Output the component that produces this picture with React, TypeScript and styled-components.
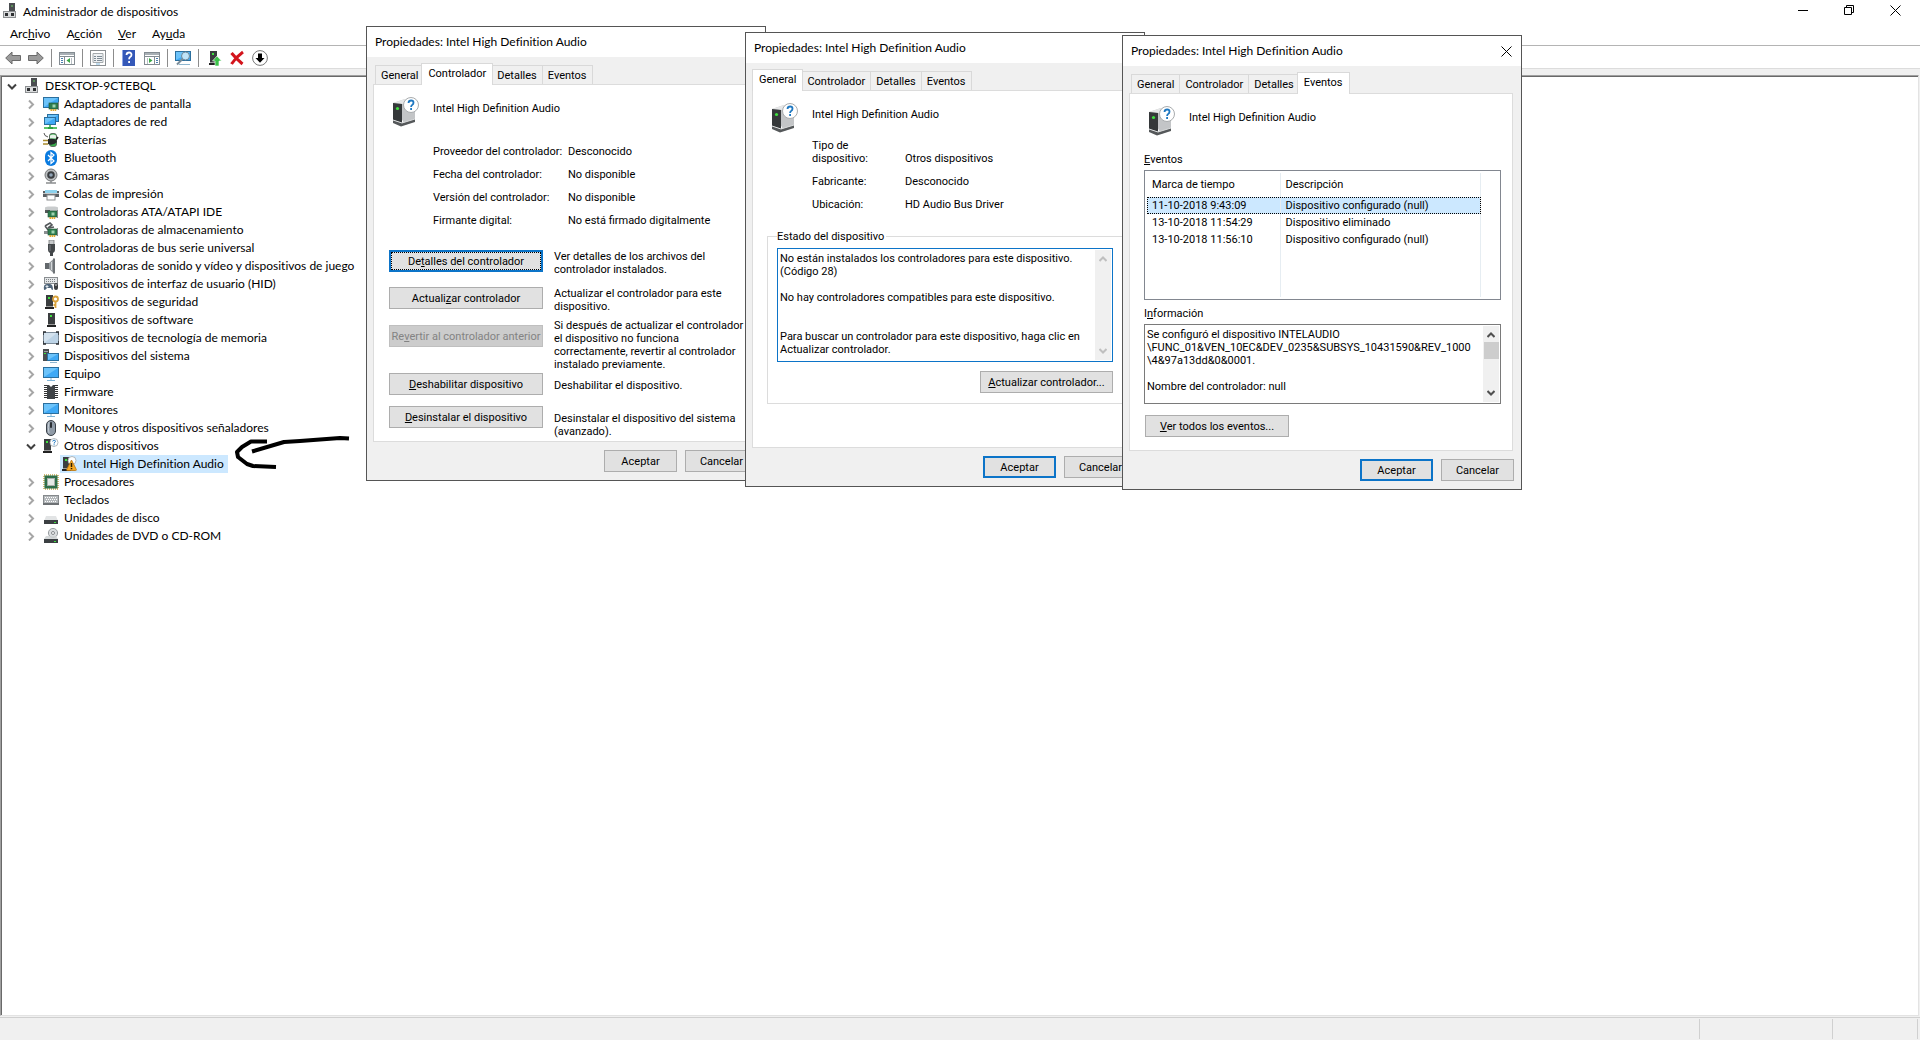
import React, { Fragment, ReactNode } from "react";
import styled, { createGlobalStyle, css } from "styled-components";

const UI_FONT = `Lato, "Open Sans", "Noto Sans", sans-serif`;
const DIALOG_FONT = `Roboto, "Liberation Sans", Arial, sans-serif`;

const color = {
  face: "#f0f0f0",
  line: "#dcdcdc",
  button: "#e1e1e1",
  buttonLine: "#adadad",
  accent: "#0c74c8",
  select: "#cce8ff",
  dark: "#696969",
  frame: "#555",
};

const GlobalStyle = createGlobalStyle`
  *, *::before, *::after { box-sizing: border-box; }
  body { margin: 0; background: #fff; color: #000; }
  button, textarea { font: inherit; color: inherit; }
`;

/* ---------- Main window ---------- */

const Desktop = styled.div`
  position: relative;
  display: flex;
  flex-direction: column;
  min-height: 100vh;
  overflow: hidden;
  font: 12px/18px ${UI_FONT};
  font-variant-ligatures: none;
`;

const TitleBar = styled.header`
  display: flex;
  align-items: flex-start;
  height: 24px;
  padding: 3px 2px 0 2px;
`;

const AppTitle = styled.h1`
  flex: 1;
  margin: 0 0 0 5px;
  font: inherit;
`;

const CaptionButton = styled.button`
  display: grid;
  place-items: center;
  width: 46px;
  height: 14px;
  padding: 0;
  border: 0;
  background: none;
`;

const MenuBar = styled.nav`
  display: flex;
  height: 22px;
  padding: 0 2px 2px;
  border-bottom: 1px solid #b4b4b4;
`;

const MenuItem = styled.button`
  padding: 0 8px;
  border: 0;
  background: none;
`;

const Toolbar = styled.div`
  display: flex;
  align-items: center;
  gap: 7px;
  height: 23px;
  padding: 2px 5px 0;
  border-bottom: 1px solid ${color.line};
`;

const ToolButton = styled.button`
  display: flex;
  padding: 0;
  border: 0;
  background: none;
`;

const ToolSeparator = styled.span`
  width: 1px;
  height: 18px;
  background: #8c8c8c;
`;

const Frame = styled.main`
  flex: 1;
  display: flex;
  padding: 6px 1px 1px 0;
  background: ${color.face};
`;

const TreePane = styled.div`
  flex: 1;
  border: 1px solid;
  border-color: #a0a0a0 #e3e3e3 #e3e3e3 #a0a0a0;
  background: #fff;
`;

const TreeInset = styled.div`
  height: 100%;
  border: solid ${color.dark};
  border-width: 1px 0 0 1px;
`;

const TreeList = styled.ul`
  margin: 0;
  padding: 0;
  list-style: none;
`;

const TreeRow = styled.div<{ $depth: number }>`
  display: flex;
  align-items: center;
  height: 18px;
  padding-left: ${(p) => p.$depth * 19}px;
`;

const Expander = styled.span`
  display: grid;
  place-items: center;
  width: 20px;
`;

const TreeLabel = styled.span<{ $selected?: boolean }>`
  display: flex;
  align-items: center;
  gap: 5px;
  padding: 0 4px 0 2px;
  white-space: nowrap;
  background: ${(p) => (p.$selected ? color.select : "none")};
`;

const StatusBar = styled.footer`
  display: flex;
  justify-content: flex-end;
  height: 23px;
  padding: 1px 2px 1px 0;
  border-top: 1px solid #d0d0d0;
  background: ${color.face};
`;

const StatusCell = styled.span<{ $width: number }>`
  width: ${(p) => p.$width}px;
  border-right: 1px solid #d0d0d0;
`;

const Scribble = styled.svg`
  position: absolute;
  left: 234px;
  top: 432px;
`;

/* ---------- Property sheets ---------- */

const Sheet = styled.section<{ $x: number; $y: number }>`
  position: absolute;
  left: ${(p) => p.$x}px;
  top: ${(p) => p.$y}px;
  display: flex;
  flex-direction: column;
  width: 400px;
  min-height: 455px;
  border: 1px solid ${color.frame};
  background: ${color.face};
  font: 11px/13px ${DIALOG_FONT};
`;

const SheetTitle = styled.div`
  display: flex;
  align-items: center;
  justify-content: space-between;
  height: 30px;
  padding: 0 0 0 8px;
  background: #fff;
  font: 12px/18px ${UI_FONT};
  font-variant-ligatures: none;
`;

const SheetHeading = styled.h2`
  margin: 0;
  font: inherit;
`;

const SheetClose = styled(CaptionButton)`
  width: 30px;
  height: 30px;
`;

const TabStrip = styled.div`
  display: flex;
  align-items: flex-end;
  height: 27px;
  padding: 0 8px;
`;

const Tab = styled.button<{ $selected: boolean }>`
  height: 19px;
  margin: 0;
  padding: 0 5px;
  border: 1px solid #d9d9d9;
  border-width: 1px 0 0 1px;
  background: ${color.face};
  white-space: nowrap;

  &:last-child { border-right-width: 1px; }

  ${(p) =>
    p.$selected &&
    css`
      z-index: 1;
      height: 22px;
      margin: 0 -2px -1px;
      padding: 0 6px 2px;
      border-right-width: 1px;
      background: #fff;
    `}
`;

const Page = styled.div`
  flex: 1;
  margin: 0 8px 0 6px;
  padding: 11px 11px 0 14px;
  border: 1px solid #dcdcdc;
  background: #fff;
`;

const DeviceHeader = styled.div`
  display: flex;
  gap: 12px;
  height: 32px;
  padding-left: 1px;
`;

const DeviceName = styled.span`
  padding-top: 6px;
`;

const Facts = styled.dl<{ $label: number; $top: number }>`
  display: grid;
  grid-template-columns: ${(p) => p.$label}px 1fr;
  align-items: end;
  margin: ${(p) => p.$top}px 0 0 45px;

  dt, dd { margin: 0; padding: 5px 0; }
  dt { white-space: pre; }
`;

const Actions = styled.div`
  display: grid;
  grid-template-rows: 37px 32px 54px 33px auto;
  margin: 18px 0 0 1px;
`;

const ActionRow = styled.div<{ $lead?: "button" | "hint" }>`
  display: grid;
  grid-template-columns: 154px 190px;
  align-items: start;
  column-gap: 11px;

  > button { margin-top: ${(p) => (p.$lead === "hint" ? 6 : 0)}px; }
  > p { margin: 0; padding-top: ${(p) => (p.$lead === "button" ? 6 : 0)}px; }
`;

const PushButton = styled.button<{ $width: number; $look?: "default" | "focused" }>`
  width: ${(p) => p.$width}px;
  height: 22px;
  padding: 0;
  border: 1px solid ${color.buttonLine};
  background: ${color.button};
  white-space: nowrap;

  &:disabled {
    border-color: #bfbfbf;
    background: #ccc;
    color: #838383;
  }

  ${(p) =>
    p.$look &&
    css`
      border: 2px solid ${color.accent};
    `}
  ${(p) =>
    p.$look === "focused" &&
    css`
      outline: 1px dotted #000;
      outline-offset: -3px;
    `}
`;

const SheetFooter = styled.div`
  display: flex;
  justify-content: flex-end;
  gap: 8px;
  padding: 8px 7px;
`;

const StatusGroup = styled.fieldset`
  display: flex;
  flex-direction: column;
  align-items: flex-end;
  gap: 9px;
  margin: 14px 0 0;
  padding: 5px 10px 10px 9px;
  border: 1px solid #dcdcdc;

  legend { padding: 0 2px 0 0; margin-left: 0; }
`;

const TextFrame = styled.div<{ $height: number; $focused?: boolean }>`
  display: flex;
  width: 100%;
  height: ${(p) => p.$height}px;
  padding: 1px;
  border: 1px solid ${(p) => (p.$focused ? color.accent : "#7a7a7a")};
  background: #fff;
`;

const TextBox = styled.textarea`
  flex: 1;
  min-width: 0;
  padding: 2px 0 0 1px;
  border: 0;
  outline: 0;
  background: none;
  resize: none;
  overflow: hidden;
  white-space: pre;
`;

const ScrollTrack = styled.div`
  display: flex;
  flex-direction: column;
  align-items: center;
  width: 16px;
  padding: 6px 0;
  background: ${color.face};
`;

const ScrollThumb = styled.span`
  width: 15px;
  height: 17px;
  margin-top: 4px;
  background: #cdcdcd;
`;

const ScrollSpace = styled.span`
  flex: 1;
`;

const EventFrame = styled.div`
  height: 130px;
  padding: 2px 19px 2px 2px;
  border: 1px solid #828790;
`;

const FieldLabel = styled.label`
  display: block;
  margin: 16px 0 4px;

  ${EventFrame} + & { margin-top: 7px; }
`;

const EventTable = styled.table`
  width: 100%;
  height: 100%;
  table-layout: fixed;
  border-collapse: collapse;

  th, td {
    height: 17px;
    padding: 0 0 0 5px;
    border-right: 1px solid #e6edf2;
    font-weight: normal;
    text-align: left;
    white-space: nowrap;
  }
  th {
    height: 24px;
    padding-bottom: 2px;
  }
  th:first-child { width: 133px; }
`;

const EventRow = styled.tr<{ $selected?: boolean }>`
  ${(p) =>
    p.$selected &&
    css`
      background: ${color.select};
      outline: 1px dotted #000;
      outline-offset: -1px;
    `}
`;

const FillerRow = styled.tr`
  td { height: auto; }
`;

const AllEvents = styled.div`
  padding: 11px 0 0 1px;
`;

/* ---------- Helpers ---------- */

/** Underlines the letter that follows "&" as the access key. */
function Mnemonic({ text }: { text: string }) {
  const at = text.indexOf("&");
  if (at < 0) return <>{text}</>;
  return (
    <>
      {text.slice(0, at)}
      <u>{text[at + 1]}</u>
      {text.slice(at + 2)}
    </>
  );
}

function Glyph({ size = 16, children }: { size?: number; children: ReactNode }) {
  return (
    <svg width={size} height={size} viewBox={`0 0 ${size} ${size}`} aria-hidden="true">
      {children}
    </svg>
  );
}

const Cross = () => (
  <svg width="11" height="11" viewBox="0 0 11 11" fill="none" stroke="#000" aria-hidden="true">
    <path d="M.5 .5l10 10M10.5 .5l-10 10" />
  </svg>
);

const Chevron = ({ open }: { open: boolean }) => (
  <svg width="10" height="10" viewBox="0 0 10 10" fill="none" strokeWidth="2" aria-hidden="true">
    {open ? <path d="M1 3.5l4 4 4-4" stroke="#404040" /> : <path d="M3 1.500l4 4-4 4" stroke="#a6a6a6" />}
  </svg>
);

const ScrollArrow = ({ up, muted }: { up?: boolean; muted?: boolean }) => (
  <svg width="8" height="6" viewBox="0 0 8 6" fill="none" stroke={muted ? "#bfbfbf" : "#505050"} strokeWidth="2" aria-hidden="true">
    <path d={up ? "M.5 5L4 1.5 7.5 5" : "M.5 1L4 4.5 7.5 1"} />
  </svg>
);

/* ---------- Icons ---------- */

const Screen = ({ x, y, w, h }: { x: number; y: number; w: number; h: number }) => (
  <>
    <rect x={x + 0.5} y={y + 0.5} width={w - 1} height={h - 1} fill="#3fa9f5" stroke="#2b6f9e" />
    <path d={`M${x + 1} ${y + 1}h${w - 2}L${x + 1} ${y + h - 1}z`} fill="#6cc3fa" />
  </>
);

const Board = ({ x, y }: { x: number; y: number }) => (
  <>
    <rect x={x} y={y} width="9" height="6" fill="#2f7d4f" stroke="#1d5434" strokeWidth=".6" />
    <rect x={x + 3.5} y={y + 1.5} width="3" height="3" fill="#9fd4b0" />
    <path d={`M${x + 1.5} ${y + 7}h6`} stroke="#e0a92e" strokeWidth="2" strokeDasharray="1.5 .6" />
    <path d={`M${x + 9.5} ${y - 1}v8`} stroke="#888" />
  </>
);

const Tower = ({ x }: { x: number }) => (
  <>
    <rect x={x} y="1" width="7" height="12" fill="#3a3d3f" />
    <rect x={x + 2} y="3" width="2" height="2" fill="#3fe03f" />
    <rect x={x - 1} y="13" width="9" height="2" fill="#222" />
    <rect x={x} y="12" width="7" height="1" fill="#9a9a9a" />
  </>
);

const icons: Record<string, ReactNode> = {
  computer: (
    <>
      <rect x="7" y="0" width="6" height="8" fill="#4a4d50" />
      <rect x="9" y="2" width="2" height="2" fill="#5c8f5c" />
      <path d="M9 8v2" stroke="#888" strokeWidth="2" />
      <rect x="1.5" y="8.5" width="12" height="6" fill="#d9dbdc" stroke="#8c8f91" />
      <rect x="3" y="10" width="3" height="3" fill="#2e3032" />
      <rect x="9" y="10" width="3" height="3" fill="#2e3032" />
    </>
  ),
  display: (
    <>
      <Screen x={0} y={1} w={16} h={11} />
      <Board x={6} y={7} />
    </>
  ),
  network: (
    <>
      <Screen x={4} y={0} w={12} h={8} />
      <Screen x={1} y={3} w={12} h={8} />
      <path d="M7 11v2M1 14h13" stroke="#5cc46a" strokeWidth="2" />
      <path d="M5 13h5v2H5z" fill="#2f9e44" />
    </>
  ),
  battery: (
    <>
      <rect x="6.5" y="1.5" width="7" height="13" rx="2.5" fill="#35b14a" stroke="#5d6d5f" />
      <path d="M7 3.5q3-2 6 0v3H7z" fill="#e8f4ea" />
      <path d="M1 1q0 3 4 4" fill="none" stroke="#555" />
      <path d="M5 7q6-1 8 1l1 2q-4 4-9 2z" fill="#26292b" />
      <path d="M0 8.5h5M0 12h5" stroke="#a98a2c" strokeWidth="1.5" />
      <path d="M13 8l2-3" stroke="#222" strokeWidth="1.5" />
    </>
  ),
  bluetooth: (
    <>
      <rect x="2" y="0" width="12" height="16" rx="6" fill="#0a7be0" />
      <path d="M5 5l6 6-3 2.5V2.500L11 5l-6 6" fill="none" stroke="#fff" strokeWidth="1.2" />
    </>
  ),
  camera: (
    <>
      <circle cx="8" cy="7" r="6" fill="#b9bcbe" stroke="#76797b" />
      <circle cx="8" cy="7" r="3.8" fill="#3a3d40" />
      <circle cx="8" cy="7" r="1.8" fill="#8fa3b5" />
      <path d="M3 15h10M8 13v2" stroke="#8a8d8f" strokeWidth="1.5" />
    </>
  ),
  printer: (
    <>
      <path d="M4 4h8l1 3H3z" fill="#35a8e0" />
      <rect x="0" y="5" width="16" height="6" fill="#5b6064" />
      <rect x="2" y="4" width="12" height="3" fill="#8ed3ee" />
      <rect x="0" y="7" width="16" height="1" fill="#c5c8ca" />
      <rect x="4" y="9" width="8" height="5" fill="#fff" stroke="#8b8e90" />
    </>
  ),
  ata: (
    <>
      <path d="M2 4q0-1.500 3-1.500h7q3 0 3 1.500v3H2z" fill="#c9cccd" />
      <rect x="2" y="6" width="5" height="3" fill="#55585a" />
      <Board x={5} y={7} />
    </>
  ),
  storage: (
    <>
      <path d="M2 4l5-3 2 2-4 3M2 4l4 5M6 6l5-1" fill="none" stroke="#55595c" strokeWidth="1.6" />
      <rect x="1" y="9" width="6" height="3" fill="#8b8f92" />
      <Board x={5} y={7} />
    </>
  ),
  usb: (
    <>
      <rect x="6" y="0" width="5" height="5" fill="#c7cacc" stroke="#77797b" strokeWidth=".8" />
      <path d="M5 4h7v6q0 2-2 3v3H7v-3q-2-1-2-3z" fill="#43474a" />
      <path d="M7 5v6" stroke="#7b7f82" />
    </>
  ),
  sound: (
    <>
      <path d="M2 5h4v6H2z" fill="#63686c" />
      <path d="M6 5l5-4.500v15L6 11z" fill="#94999d" />
      <path d="M8.500 4v8" stroke="#d4d8da" />
      <path d="M11 .5v15" stroke="#6e7377" strokeWidth="2" />
    </>
  ),
  hid: (
    <>
      <rect x="1.5" y="1.5" width="13" height="6" fill="#e3e6e8" stroke="#8a8e91" />
      <path d="M3 3.500h10M3 5.500h10" stroke="#7e8285" strokeDasharray="1 1" />
      <path d="M1 14q-1-6 3-6h3q3 0 3 6-2 0-2-2H4q-1 2-3 2z" fill="#4f6479" />
      <path d="M4 9v3M2.500 10.500h3" stroke="#dfe6ec" />
      <rect x="11" y="7" width="4" height="7" rx="2" fill="#3b3e41" />
      <path d="M13 8v2" stroke="#ddd" />
    </>
  ),
  security: (
    <>
      <Tower x={3} />
      <circle cx="12.5" cy="5" r="2.5" fill="none" stroke="#d9a23c" strokeWidth="1.8" />
      <path d="M12.500 7v7M12.500 11h-2" stroke="#d9a23c" strokeWidth="1.8" />
    </>
  ),
  software: <Tower x={5} />,
  memory: (
    <>
      <rect x="0.5" y="2.5" width="15" height="11" fill="#bcd3e6" stroke="#7b8b99" />
      <path d="M1 3h13L1 13z" fill="#d3e2ee" />
      <path d="M0 5V2h3M13 2h3v3M16 11v3h-3M3 14H0v-3" fill="none" stroke="#2b2f33" strokeWidth="1.5" />
    </>
  ),
  system: (
    <>
      <rect x="0" y="1" width="6" height="12" fill="#4a4d50" />
      <rect x="1" y="3" width="4" height="1" fill="#9ea2a5" />
      <rect x="1" y="5" width="2" height="1" fill="#3fe03f" />
      <Screen x={4} y={5} w={12} h={8} />
      <path d="M7 14.500h7" stroke="#8fb6cf" />
    </>
  ),
  monitor: (
    <>
      <Screen x={0} y={1} w={16} h={11} />
      <path d="M8 12v2M4 14.500h8" stroke="#7fb4d6" />
    </>
  ),
  firmware: (
    <>
      <path d="M2.500 1v14M13.500 1v14" stroke="#333" strokeWidth="3" strokeDasharray="1 1" />
      <path d="M4 1h2l2 2 2-2h2v14H4z" fill="#3f4346" />
    </>
  ),
  mouse: (
    <>
      <rect x="3.5" y="0.5" width="9" height="15" rx="4.5" fill="#8f9aa6" stroke="#3b4148" />
      <path d="M6 2q-1.500 5 0 11" fill="none" stroke="#c8d0d8" />
      <rect x="7" y="2" width="2" height="6" rx="1" fill="#2a2e33" />
    </>
  ),
  unknown: (
    <>
      <Tower x={1} />
      <circle cx="11" cy="4.5" r="4" fill="#fff" stroke="#9fa6ab" strokeWidth=".8" />
      <path d="M9.700 3.500q.2-1.300 1.400-1.300 1.300 0 1.300 1.100 0 .9-1.300 1.600v.6M11.100 6.300v1" fill="none" stroke="#1f78c1" />
    </>
  ),
  warning: (
    <>
      <Tower x={1} />
      <circle cx="10" cy="4.5" r="4" fill="#fff" stroke="#9fa6ab" strokeWidth=".8" />
      <path d="M9.500 4l4.800 9.500q.3 1-.8 1H5.500q-1.100 0-.8-1z" fill="#f7a823" stroke="#b8730d" strokeWidth=".8" />
      <path d="M9.500 7v4M9.500 12v1.300" stroke="#2a1c00" strokeWidth="1.5" />
    </>
  ),
  processor: (
    <>
      <rect x="1" y="1" width="14" height="14" fill="none" stroke="#c3a548" strokeWidth="1.5" strokeDasharray="1 1" />
      <rect x="1.5" y="1.5" width="13" height="13" fill="#2f6f4a" />
      <rect x="4.5" y="4.5" width="7" height="7" fill="#e6eae7" stroke="#a7b0aa" />
    </>
  ),
  keyboard: (
    <>
      <rect x="0.5" y="3.5" width="15" height="9" fill="#b4b8bb" stroke="#85898c" />
      <path d="M2 5.500h12M3 7.500h11M2 9.500h12" stroke="#fff" strokeDasharray="1 1" />
      <rect x="0" y="11" width="16" height="2" fill="#6d7174" />
    </>
  ),
  disk: (
    <>
      <path d="M3 6h10l2 5H1z" fill="#e2e4e5" />
      <rect x="1" y="10" width="14" height="4" fill="#3b3f42" />
      <rect x="11" y="12" width="2" height="1" fill="#3fe03f" />
    </>
  ),
  optical: (
    <>
      <circle cx="10" cy="5" r="4.6" fill="#dadddf" stroke="#9a9ea1" />
      <circle cx="10" cy="5" r="1.5" fill="#fff" stroke="#85898c" />
      <path d="M3 8h10l2 3H1z" fill="#cfd2d4" opacity=".85" />
      <rect x="1" y="11" width="14" height="4" fill="#3b3f42" />
      <rect x="11" y="13" width="2" height="1" fill="#3fe03f" />
    </>
  ),
  back: <path d="M.7 8l6.300-6v3.500h8.500v5H7V14z" fill="#9b9b9b" stroke="#6a6a6a" />,
  forward: <path d="M15.300 8L9 2v3.500H.5v5H9V14z" fill="#9b9b9b" stroke="#6a6a6a" />,
  consoleTree: (
    <>
      <rect x=".5" y="2.5" width="15" height="12" fill="#fff" stroke="#848c92" />
      <path d="M1 4h14" stroke="#a9b0b5" strokeWidth="2" />
      <path d="M1 6.500h14M5.500 7v7" stroke="#848c92" />
      <path d="M2 8.500h2M2 10.500h2M2 12.500h2" stroke="#4a7fb0" />
      <path d="M11 8v5L7.500 10.500z" fill="#3aa845" />
      <path d="M12.500 8v6" stroke="#b9c0c5" />
    </>
  ),
  properties: (
    <>
      <rect x=".5" y=".5" width="15" height="15" fill="#fff" stroke="#8b8f92" />
      <path d="M3 3.500h10v9H3z" fill="#eef1f3" stroke="#a5aaad" />
      <path d="M4 6.500h2M7 6.500h5M4 8.500h2M7 8.500h5M4 10.500h2M7 10.500h5" stroke="#7d8a94" />
      <path d="M6 14h4" stroke="#7fb7dd" />
    </>
  ),
  help: (
    <>
      <rect x="1" y="0" width="13" height="16" fill="#3458b8" />
      <path d="M1.500 0v16" stroke="#8ea6e6" />
      <path d="M5.500 5q.2-2.500 2.600-2.500t2.400 2.200q0 1.500-1.400 2.400-1 .7-1 2.200M8.100 11v2" fill="none" stroke="#fff" strokeWidth="1.8" />
    </>
  ),
  actionPane: (
    <>
      <rect x=".5" y="2.5" width="15" height="12" fill="#fff" stroke="#848c92" />
      <path d="M1 4h14" stroke="#a9b0b5" strokeWidth="2" />
      <path d="M1 6.500h14M10.500 7v7" stroke="#848c92" />
      <path d="M12 8.500h2M12 10.500h2M12 12.500h2" stroke="#4a7fb0" />
      <path d="M5 8v5l3.500-2.500z" fill="#3aa845" />
      <path d="M3.500 8v6" stroke="#b9c0c5" />
    </>
  ),
  scan: (
    <>
      <Screen x={0} y={1} w={16} h={10} />
      <path d="M4 14.500h11" stroke="#8fb6cf" />
      <circle cx="10.5" cy="6" r="4" fill="#bfe3f8" stroke="#6f8797" />
      <path d="M7.500 9L2 14.500" stroke="#7a8c99" strokeWidth="2" />
    </>
  ),
  updateDriver: (
    <>
      <Tower x={4} />
      <path d="M11 6l4.500 5H13v5H9v-5H6.500z" fill="#3cc24a" stroke="#fff" strokeWidth=".6" />
    </>
  ),
  uninstall: <path d="M2.500 3q4 5 11 11M14 2Q7 7 2.500 14" fill="none" stroke="#d3141c" strokeWidth="3" />,
  disable: (
    <>
      <circle cx="8" cy="8" r="7.4" fill="#fff" stroke="#777" />
      <path d="M6 3.500h4V8h2.500L8 12.800 3.500 8H6z" fill="#000" />
    </>
  ),
};

const DeviceIcon = () => (
  <Glyph size={32}>
    <path d="M4 7l12-4 10 2v20l-10 4z" fill="#c3c5c7" />
    <path d="M4 7l12-4 10 2-12 3z" fill="#e6e7e8" />
    <path d="M4 7l9 1v19l-9-3z" fill="#35383a" />
    <path d="M4 24l9 3 13-4v3l-14 4.500L4 27z" fill="#55585a" />
    <path d="M4 24l9 3 13-4" fill="none" stroke="#dadcdd" />
    <circle cx="8.5" cy="12.5" r="1.6" fill="#3fe03f" />
    <circle cx="22" cy="9" r="7.5" fill="#fff" stroke="#a9acae" />
    <path d="M19.500 7q.2-2.500 2.600-2.500t2.400 2.200q0 1.300-1.400 2.200-1 .6-1 2M22.100 12v2" fill="none" stroke="#1f78c1" strokeWidth="1.8" />
  </Glyph>
);

/* ---------- Data ---------- */

interface TreeNode {
  icon: string;
  label: string;
  open?: boolean;
  selected?: boolean;
  children?: TreeNode[];
}

const tree: TreeNode = {
  icon: "computer",
  label: "DESKTOP-9CTEBQL",
  open: true,
  children: [
    { icon: "display", label: "Adaptadores de pantalla" },
    { icon: "network", label: "Adaptadores de red" },
    { icon: "battery", label: "Baterías" },
    { icon: "bluetooth", label: "Bluetooth" },
    { icon: "camera", label: "Cámaras" },
    { icon: "printer", label: "Colas de impresión" },
    { icon: "ata", label: "Controladoras ATA/ATAPI IDE" },
    { icon: "storage", label: "Controladoras de almacenamiento" },
    { icon: "usb", label: "Controladoras de bus serie universal" },
    { icon: "sound", label: "Controladoras de sonido y vídeo y dispositivos de juego" },
    { icon: "hid", label: "Dispositivos de interfaz de usuario (HID)" },
    { icon: "security", label: "Dispositivos de seguridad" },
    { icon: "software", label: "Dispositivos de software" },
    { icon: "memory", label: "Dispositivos de tecnología de memoria" },
    { icon: "system", label: "Dispositivos del sistema" },
    { icon: "monitor", label: "Equipo" },
    { icon: "firmware", label: "Firmware" },
    { icon: "monitor", label: "Monitores" },
    { icon: "mouse", label: "Mouse y otros dispositivos señaladores" },
    {
      icon: "unknown",
      label: "Otros dispositivos",
      open: true,
      children: [{ icon: "warning", label: "Intel High Definition Audio", selected: true }],
    },
    { icon: "processor", label: "Procesadores" },
    { icon: "keyboard", label: "Teclados" },
    { icon: "disk", label: "Unidades de disco" },
    { icon: "optical", label: "Unidades de DVD o CD-ROM" },
  ],
};

const menus = ["Arc&hivo", "A&cción", "&Ver", "Ay&uda"];

const tools: { icon: string; label: string }[][] = [
  [{ icon: "back", label: "Atrás" }, { icon: "forward", label: "Adelante" }],
  [{ icon: "consoleTree", label: "Mostrar u ocultar árbol de consola" }],
  [{ icon: "properties", label: "Propiedades" }],
  [{ icon: "help", label: "Ayuda" }, { icon: "actionPane", label: "Mostrar u ocultar panel de acciones" }],
  [{ icon: "scan", label: "Buscar cambios de hardware" }],
  [
    { icon: "updateDriver", label: "Actualizar controlador" },
    { icon: "uninstall", label: "Desinstalar el dispositivo" },
    { icon: "disable", label: "Deshabilitar dispositivo" },
  ],
];

const tabs = ["General", "Controlador", "Detalles", "Eventos"];

const statusText = `No están instalados los controladores para este dispositivo.
(Código 28)

No hay controladores compatibles para este dispositivo.


Para buscar un controlador para este dispositivo, haga clic en
Actualizar controlador.`;

const infoText = `Se configuró el dispositivo INTELAUDIO
\\FUNC_01&VEN_10EC&DEV_0235&SUBSYS_10431590&REV_1000
\\4&97a13dd&0&0001.

Nombre del controlador: null`;

const events = [
  ["11-10-2018 9:43:09", "Dispositivo configurado (null)"],
  ["13-10-2018 11:54:29", "Dispositivo eliminado"],
  ["13-10-2018 11:56:10", "Dispositivo configurado (null)"],
];

/* ---------- Components ---------- */

function TreeBranch({ node, depth }: { node: TreeNode; depth: number }) {
  const leaf = depth === 2;
  return (
    <li role="treeitem" aria-expanded={leaf ? undefined : !!node.open} aria-selected={!!node.selected}>
      <TreeRow $depth={depth}>
        <Expander>{!leaf && <Chevron open={!!node.open} />}</Expander>
        <TreeLabel $selected={node.selected}>
          <Glyph>{icons[node.icon]}</Glyph>
          {node.label}
        </TreeLabel>
      </TreeRow>
      {node.children && (
        <TreeList role="group">
          {node.children.map((child) => (
            <TreeBranch key={child.label} node={child} depth={depth + 1} />
          ))}
        </TreeList>
      )}
    </li>
  );
}

interface SheetProps {
  x: number;
  y: number;
  active: string;
  okDefault?: boolean;
  children: ReactNode;
}

function PropertySheet({ x, y, active, okDefault, children }: SheetProps) {
  return (
    <Sheet $x={x} $y={y} role="dialog" aria-label={`Propiedades, ${active}`}>
      <SheetTitle>
        <SheetHeading>Propiedades: Intel High Definition Audio</SheetHeading>
        <SheetClose aria-label="Cerrar">
          <Cross />
        </SheetClose>
      </SheetTitle>
      <TabStrip role="tablist">
        {tabs.map((tab) => (
          <Tab key={tab} role="tab" $selected={tab === active} aria-selected={tab === active}>
            {tab}
          </Tab>
        ))}
      </TabStrip>
      <Page>
        <DeviceHeader>
          <DeviceIcon />
          <DeviceName>Intel High Definition Audio</DeviceName>
        </DeviceHeader>
        {children}
      </Page>
      <SheetFooter>
        <PushButton $width={73} $look={okDefault ? "default" : undefined}>
          Aceptar
        </PushButton>
        <PushButton $width={73}>Cancelar</PushButton>
      </SheetFooter>
    </Sheet>
  );
}

function FactList({ label, top, rows }: { label: number; top: number; rows: string[][] }) {
  return (
    <Facts $label={label} $top={top}>
      {rows.map(([name, value]) => (
        <Fragment key={name}>
          <dt>{name}</dt>
          <dd>{value}</dd>
        </Fragment>
      ))}
    </Facts>
  );
}

export default function App() {
  return (
    <>
      <GlobalStyle />
      <Desktop>
        <TitleBar>
          <Glyph>{icons.computer}</Glyph>
          <AppTitle>Administrador de dispositivos</AppTitle>
          <CaptionButton aria-label="Minimizar">
            <svg width="10" height="10" aria-hidden="true">
              <path d="M0 5.500h10" stroke="#000" />
            </svg>
          </CaptionButton>
          <CaptionButton aria-label="Restaurar">
            <svg width="10" height="10" fill="none" stroke="#000" aria-hidden="true">
              <path d="M.5 2.500h7v7h-7zM2.500 2.500v-2h7v7h-2" />
            </svg>
          </CaptionButton>
          <CaptionButton aria-label="Cerrar">
            <Cross />
          </CaptionButton>
        </TitleBar>
        <MenuBar>
          {menus.map((menu) => (
            <MenuItem key={menu}>
              <Mnemonic text={menu} />
            </MenuItem>
          ))}
        </MenuBar>
        <Toolbar role="toolbar">
          {tools.map((group, i) => (
            <Fragment key={group[0].icon}>
              {i > 0 && <ToolSeparator />}
              {group.map((tool) => (
                <ToolButton key={tool.icon} aria-label={tool.label}>
                  <Glyph>{icons[tool.icon]}</Glyph>
                </ToolButton>
              ))}
            </Fragment>
          ))}
        </Toolbar>
        <Frame>
          <TreePane>
            <TreeInset>
              <TreeList role="tree">
                <TreeBranch node={tree} depth={0} />
              </TreeList>
            </TreeInset>
          </TreePane>
        </Frame>
        <StatusBar>
          <StatusCell $width={133} />
          <StatusCell $width={133} />
          <StatusCell $width={85} />
        </StatusBar>

        <Scribble width="120" height="40" viewBox="0 0 120 40" fill="none" stroke="#000" strokeWidth="4" strokeLinejoin="round" aria-hidden="true">
          <path d="M18 19.500L50 10l16-1 40-3 9 .5" />
          <path d="M33 9.500H17L8 15l-5 5 1 5 9 7 6 2 23 1" />
        </Scribble>

        <PropertySheet x={366} y={26} active="Controlador">
          <FactList
            label={135}
            top={12}
            rows={[
              ["Proveedor del controlador:", "Desconocido"],
              ["Fecha del controlador:", "No disponible"],
              ["Versión del controlador:", "No disponible"],
              ["Firmante digital:", "No está firmado digitalmente"],
            ]}
          />
          <Actions>
            <ActionRow>
              <PushButton $width={154} $look="focused">
                <Mnemonic text="De&talles del controlador" />
              </PushButton>
              <p>Ver detalles de los archivos del controlador instalados.</p>
            </ActionRow>
            <ActionRow>
              <PushButton $width={154}>
                <Mnemonic text="Actuali&zar controlador" />
              </PushButton>
              <p>Actualizar el controlador para este dispositivo.</p>
            </ActionRow>
            <ActionRow $lead="hint">
              <PushButton $width={154} disabled>
                <Mnemonic text="Re&vertir al controlador anterior" />
              </PushButton>
              <p>Si después de actualizar el controlador el dispositivo no funciona correctamente, revertir al controlador instalado previamente.</p>
            </ActionRow>
            <ActionRow $lead="button">
              <PushButton $width={154}>
                <Mnemonic text="&Deshabilitar dispositivo" />
              </PushButton>
              <p>Deshabilitar el dispositivo.</p>
            </ActionRow>
            <ActionRow $lead="button">
              <PushButton $width={154}>
                <Mnemonic text="&Desinstalar el dispositivo" />
              </PushButton>
              <p>Desinstalar el dispositivo del sistema (avanzado).</p>
            </ActionRow>
          </Actions>
        </PropertySheet>

        <PropertySheet x={745} y={32} active="General" okDefault>
          <FactList
            label={93}
            top={0}
            rows={[
              ["Tipo de\ndispositivo:", "Otros dispositivos"],
              ["Fabricante:", "Desconocido"],
              ["Ubicación:", "HD Audio Bus Driver"],
            ]}
          />
          <StatusGroup>
            <legend>Estado del dispositivo</legend>
            <TextFrame $height={114} $focused>
              <TextBox readOnly aria-label="Estado del dispositivo" defaultValue={statusText} />
              <ScrollTrack>
                <ScrollArrow up muted />
                <ScrollSpace />
                <ScrollArrow muted />
              </ScrollTrack>
            </TextFrame>
            <PushButton $width={133}>
              <Mnemonic text="&Actualizar controlador..." />
            </PushButton>
          </StatusGroup>
        </PropertySheet>

        <PropertySheet x={1122} y={35} active="Eventos" okDefault>
          <FieldLabel as="div" id="events-label">
            <Mnemonic text="&Eventos" />
          </FieldLabel>
          <EventFrame>
            <EventTable aria-labelledby="events-label">
              <thead>
                <tr>
                  <th>Marca de tiempo</th>
                  <th>Descripción</th>
                </tr>
              </thead>
              <tbody>
                {events.map(([time, text], i) => (
                  <EventRow key={time} $selected={i === 0}>
                    <td>{time}</td>
                    <td>{text}</td>
                  </EventRow>
                ))}
                <FillerRow>
                  <td />
                  <td />
                </FillerRow>
              </tbody>
            </EventTable>
          </EventFrame>
          <FieldLabel htmlFor="info">
            <Mnemonic text="I&nformación" />
          </FieldLabel>
          <TextFrame $height={80}>
            <TextBox id="info" readOnly defaultValue={infoText} />
            <ScrollTrack>
              <ScrollArrow up />
              <ScrollThumb />
              <ScrollSpace />
              <ScrollArrow />
            </ScrollTrack>
          </TextFrame>
          <AllEvents>
            <PushButton $width={144}>
              <Mnemonic text="&Ver todos los eventos..." />
            </PushButton>
          </AllEvents>
        </PropertySheet>
      </Desktop>
    </>
  );
}
